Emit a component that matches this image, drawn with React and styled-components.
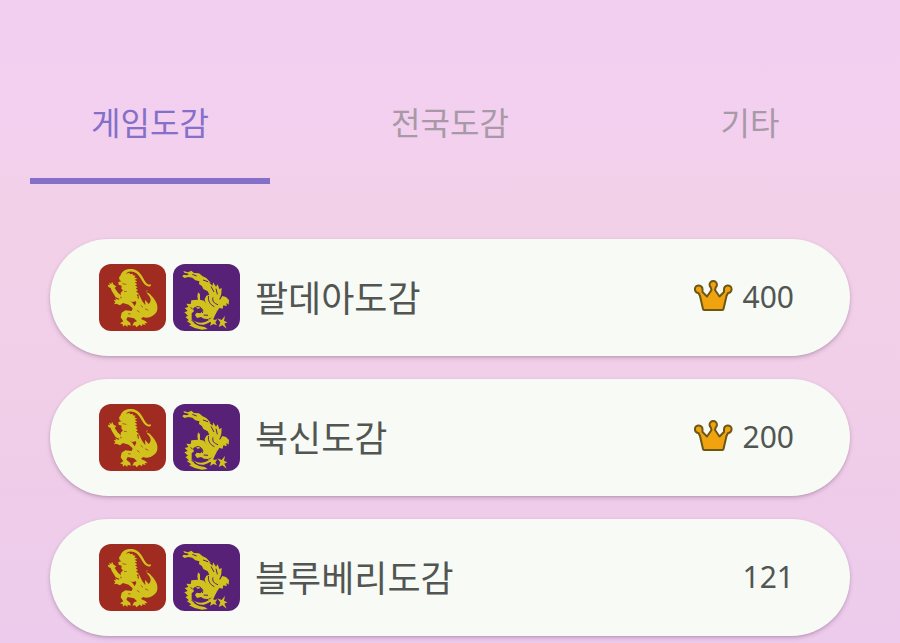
import React, { useState } from 'react'
import styled, { createGlobalStyle } from 'styled-components'

const GlobalStyle = createGlobalStyle`
    * {
        box-sizing: border-box;
    }
    body {
        margin: 0;
        font-family: "Noto Sans", "Noto Sans CJK KR", sans-serif;
    }
`
const Page = styled.main`
    min-height: 100vh;
    padding-top: 60px;
    background: linear-gradient(180deg, #f2cff1 0, #f3d0ee 150px, #f2d0e8 200px, #f1cfe8 380px, #eeccea 520px, #edcbec 643px);
`
const Tabs = styled.div`
    display: grid;
    grid-template-columns: repeat(3, 1fr);
`
const Tab = styled.button`
    height: 124px;
    margin: 0 30px;
    padding: 4px 0 0;
    border: 0;
    border-bottom: 6px solid ${({ $active }) => ($active ? '#846fc9' : 'transparent')};
    background: none;
    color: ${({ $active }) => ($active ? '#846fc9' : '#a79aa6')};
    font-family: "Noto Sans CJK KR", sans-serif;
    font-size: 32px;
    line-height: 48px;
    cursor: pointer;
`
const List = styled.ul`
    display: flex;
    flex-direction: column;
    gap: 23px;
    margin: 0;
    padding: 55px 50px 0;
    list-style: none;
`
const Card = styled.button`
    display: flex;
    align-items: center;
    gap: 7px;
    width: 100%;
    padding: 25px 56px 25px 49px;
    border: 0;
    border-radius: 59px;
    background: #f8faf5;
    box-shadow: 0 2px 4px rgba(90, 50, 90, .26), 0 1px 2px rgba(90, 50, 90, .1);
    color: #515652;
    font-family: inherit;
    text-align: left;
    cursor: pointer;
`
const Emblem = styled.svg`
    display: block;
    flex: none;
    width: 67px;
    height: 67px;
    border-radius: 12px;
    background: ${({ $color }) => $color};
    fill: #d2c21e;
`
const Name = styled.span`
    flex: 1;
    padding: 0 0 4px 8px;
    font-family: "Noto Sans CJK KR", sans-serif;
    font-size: 36px;
    line-height: 48px;
`
const Count = styled.span`
    display: flex;
    align-items: center;
    gap: 9px;
    padding-bottom: 2px;
    font-size: 30px;
    line-height: 48px;
`
const CrownIcon = styled.svg`
    width: 40px;
    height: 34px;
`

const dexes = [
    { id: 1, name: '팔데아도감', count: 400, complete: true },
    { id: 2, name: '북신도감', count: 200, complete: true },
    { id: 3, name: '블루베리도감', count: 121, complete: false },
]

function Scarlet() {
    return (
        <Emblem $color="#a02b20" viewBox="12 12 201 201" aria-hidden="true">
            <path d="M76 48C80 32 95 25 111 27C126 29 137 39 144 53C151 66 157 74 163 74L166 71L168 77C162 82 154 79 148 72C141 63 136 50 126 41C112 31 96 32 90 45Z" />
            <path d="M72 52L84 40L84 45L94 36L94 41L104 38L105 43L114 41L113 46L122 47L118 52L127 56L119 59L127 65L119 67L127 73L120 76L128 82L122 85L129 91L123 94L131 101L125 105L130 112L122 114L125 123L112 126L98 121L88 122L78 110L77 98L84 91L79 86L80 77L71 74L70 66L79 64L84 66L74 61Z" />
            <path d="M39 74L45 76L42 68L49 72L51 65L56 74L64 79L59 84L69 98L78 106L76 118L62 112L50 92L47 84L40 81Z" />
            <path d="M56 120L64 121L60 115L70 119L80 113L97 116L112 128L119 139L124 128L116 105L132 117L130 99L142 124L151 136L150 119L161 132C170 123 168 114 160 105C154 98 152 92 158 90L154 99C162 96 170 108 179 119C191 136 190 156 176 165C166 173 155 175 144 171L138 177L151 183L158 190L149 189L152 195L142 193L141 199L133 194L125 202L120 196L112 197L117 187L126 184L117 175L98 171L94 179L106 189L107 197L98 194L97 201L90 195L84 200L83 193L75 190L85 184L77 172L80 158L91 151L110 153L113 145L101 134L84 129L75 136L64 131L57 133L61 126Z" />
            <g fill="none" stroke="#a02b20" strokeWidth="2">
                <path d="M82 71l12 2M87 94l8 1M126 151l8 6M150 146l10 5M137 136l7 6M99 161l8 1" />
            </g>
        </Emblem>
    )
}

function Violet() {
    return (
        <Emblem $color="#562176" viewBox="12 12 201 201" aria-hidden="true">
            <path d="M43 33L57 37L67 32L75 39L90 40L101 49L112 54L125 68L116 68L119 77L100 79L90 72L91 64L79 61L70 53L58 51L46 54L40 49L44 44L54 46L60 42L46 38Z" />
            <path d="M97 74L119 67L131 77L132 67L141 80L146 73L151 87L158 84L157 101L153 114L145 122L132 112L121 104L116 94L103 87Z" />
            <path d="M112 107L125 103L139 108L153 119L160 108L171 111L180 120L179 134L172 129L173 139L163 136L161 146L151 144L145 153L134 150C117 148 108 133 107 117Z" />
            <path d="M87 97L93 103L93 119L105 122L114 135L129 145L145 152L139 164L130 172L117 177L105 176L96 171L84 174L78 165L83 158L94 160L101 153L96 144L86 146L78 140L72 146L75 154L68 160L68 176L77 191L91 198L107 201L116 207L99 209L77 204L60 196L67 193L53 183L60 181L49 171L57 167L46 157L56 153L47 144L58 141L52 131L65 132L67 121L87 119L85 109Z" />
            <path d="M72 180C88 193 108 188 120 180L129 171L138 163C137 179 120 191 105 194C91 196 79 189 72 180Z" />
            <path d="M116 176L127 181L129 172L135 180L145 178L139 187L144 196L133 192L123 198L126 188Z" />
            <path d="M145 175L158 180L168 167L165 182L175 187L166 191L173 206L160 196L149 201L154 187Z" />
            <g fill="none" stroke="#562176" strokeWidth="3">
                <path d="M70 43l13 5M102 60l15 5M126 79l9 17M141 86l4 17M119 108c-3 14 4 26 17 32M132 112c-3 12 3 18 15 22M80 142c10-8 26 6 20 17M104 165l13 1M65 142l6 6M67 180l13 10" />
            </g>
        </Emblem>
    )
}

function Crown() {
    return (
        <CrownIcon viewBox="1 1 40 34" role="img" aria-label="완성">
            <path
                d="M10 30L7 17L5.500 14A3.800 3.800 0 1 1 9.500 10.500L9.500 13L14 17.500L18.500 11L17.800 8.500A3.700 3.700 0 1 1 22.700 8.500L22 11L26.500 17.500L31 13L31 10.500A3.800 3.800 0 1 1 35 14L33.500 17L30.500 30Q30.300 31 29.500 31L11 31Q10.200 31 10 30Z"
                fill="#f0a20f"
                stroke="#6b5716"
                strokeWidth="2"
                strokeLinejoin="round"
            />
        </CrownIcon>
    )
}

function App() {
    const [active, setActive] = useState('게임도감')

    return (
        <Page>
            <GlobalStyle />
            <Tabs role="tablist">
                { ['게임도감', '전국도감', '기타'].map(tab => (
                    <Tab key={tab} role="tab" aria-selected={tab === active} $active={tab === active} onClick={() => setActive(tab)}>
                        {tab}
                    </Tab>
                )) }
            </Tabs>
            <List>
                { dexes.map(dex => (<li key={dex.id}>
                    <Card>
                        <Scarlet />
                        <Violet />
                        <Name>{dex.name}</Name>
                        <Count>
                            {dex.complete && <Crown />}
                            <span>{dex.count}</span>
                        </Count>
                    </Card>
                </li>)) }
            </List>
        </Page>
    )
}

export default App
